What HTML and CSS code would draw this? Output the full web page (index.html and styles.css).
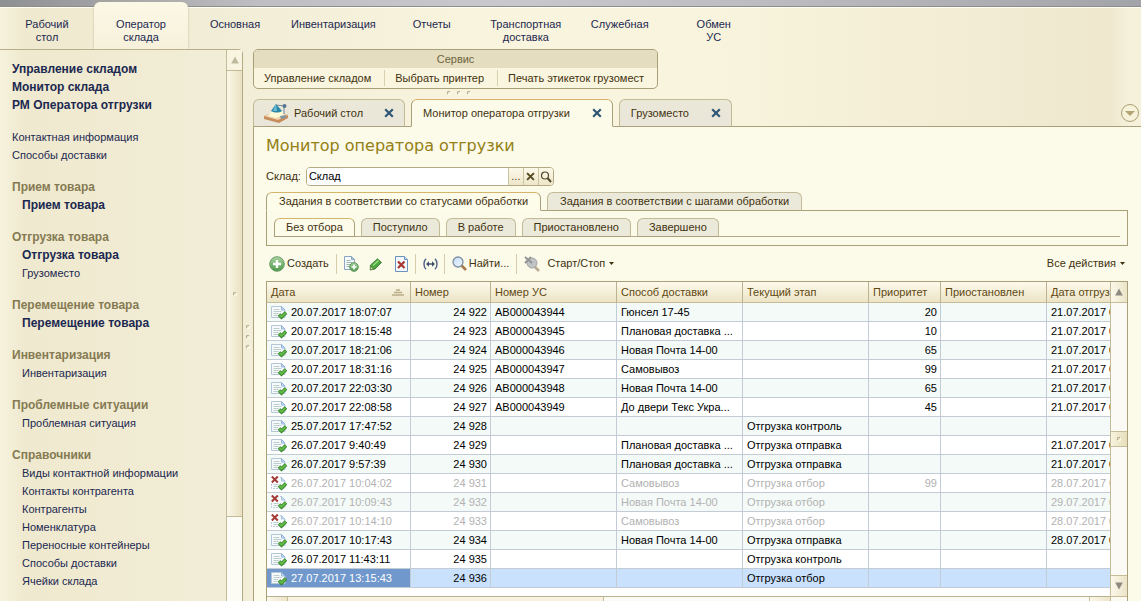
FILE: index.html
```html
<!DOCTYPE html>
<html lang="ru">
<head>
<meta charset="utf-8">
<title>Монитор оператора отгрузки</title>
<link rel="stylesheet" href="styles.css">
</head>
<body>
<svg class="defs" aria-hidden="true">
  <defs>
    <linearGradient id="gGreen" x1="0" y1="0" x2="0" y2="1"><stop offset="0" stop-color="#a9d3a0"/><stop offset="1" stop-color="#4c9a48"/></linearGradient>
    <linearGradient id="gLens" x1="0" y1="0" x2="1" y2="1"><stop offset="0" stop-color="#c3dcf2"/><stop offset="1" stop-color="#f1f8fe"/></linearGradient>
    <symbol id="doc" viewBox="0 0 16 16">
      <path d="M.5 1.500h10l3.500 3.500v7.500H.5z" fill="#f6fafd" stroke="#b3c8d4"/>
      <path d="M10.500 1.500V5H14z" fill="#cfe0f3" stroke="#90b2dc"/>
      <path d="M2.500 4.500h6M2.500 6.500h8M2.500 8.500h5M2.500 10.500h4" stroke="#bccfcb"/>
      <path d="M8 9.500l2.500 2.500 4.500-4.500" fill="none" stroke="#2f7d2a" stroke-width="3.600"/>
      <path d="M8.300 9.800l2.200 2 4.200-4" fill="none" stroke="#63bb45" stroke-width="2"/>
    </symbol>
    <symbol id="docdel" viewBox="0 0 16 16">
      <path d="M.5 8v4.500H14V5l-3.500-3.500H8" fill="#f8fbfd" stroke="#b9cad6" stroke-dasharray="2 1"/>
      <path d="M10.500 1.500V5H14z" fill="#cfe0f3" stroke="#a9c3e4"/>
      <path d="M2.500 8.500h5M2.500 10.500h4" stroke="#bccfcb"/>
      <path d="M8 9.500l2.500 2.500 4.500-4.500" fill="none" stroke="#2f7d2a" stroke-width="3.600"/>
      <path d="M8.300 9.800l2.200 2 4.200-4" fill="none" stroke="#63bb45" stroke-width="2"/>
      <path d="M.8.500l6 6M6.800.500l-6 6" stroke="#a33a36" stroke-width="2"/>
    </symbol>
    <symbol id="cross" viewBox="0 0 10 10"><path d="M1.200 1.200l7.600 7.600M8.800 1.200L1.200 8.800" stroke="currentColor" stroke-width="2.200"/></symbol>
    <symbol id="down" viewBox="0 0 5 3"><path d="M0 0h5L2.500 3z" fill="currentColor"/></symbol>
    <symbol id="up" viewBox="0 0 8 8"><path d="M4 .5L7.800 7.500H.2z" fill="currentColor"/></symbol>
  </defs>
</svg>

<div class="strip"></div>
<nav class="sections">
  <a href="#">Рабочий<br>стол</a>
  <a href="#" class="current">Оператор<br>склада</a>
  <a href="#">Основная</a>
  <a href="#">Инвентаризация</a>
  <a href="#">Отчеты</a>
  <a href="#">Транспортная<br>доставка</a>
  <a href="#">Служебная</a>
  <a href="#">Обмен<br>УС</a>
</nav>

<div class="work">
  <aside class="side">
    <nav class="menu">
      <div class="group top">
        <a href="#" class="strong">Управление складом</a>
        <a href="#" class="strong">Монитор склада</a>
        <a href="#" class="strong">РМ Оператора отгрузки</a>
      </div>
      <div class="group top">
        <a href="#">Контактная информация</a>
        <a href="#">Способы доставки</a>
      </div>
      <div class="group">
        <h2>Прием товара</h2>
        <a href="#" class="strong">Прием товара</a>
      </div>
      <div class="group">
        <h2>Отгрузка товара</h2>
        <a href="#" class="strong">Отгрузка товара</a>
        <a href="#">Грузоместо</a>
      </div>
      <div class="group">
        <h2>Перемещение товара</h2>
        <a href="#" class="strong">Перемещение товара</a>
      </div>
      <div class="group">
        <h2>Инвентаризация</h2>
        <a href="#">Инвентаризация</a>
      </div>
      <div class="group">
        <h2>Проблемные ситуации</h2>
        <a href="#">Проблемная ситуация</a>
      </div>
      <div class="group">
        <h2>Справочники</h2>
        <a href="#">Виды контактной информации</a>
        <a href="#">Контакты контрагента</a>
        <a href="#">Контрагенты</a>
        <a href="#">Номенклатура</a>
        <a href="#">Переносные контейнеры</a>
        <a href="#">Способы доставки</a>
        <a href="#">Ячейки склада</a>
      </div>
    </nav>
    <div class="side-scroll">
      <span class="arrow"><svg width="8" height="8"><use href="#up"/></svg></span>
      <span class="thumb"><i class="dot"></i></span>
    </div>
  </aside>
  <div class="splitter"><i class="dot"></i><i class="dot"></i><i class="dot"></i></div>

  <main class="main">
    <section class="service">
      <h2>Сервис</h2>
      <div class="commands">
        <button type="button">Управление складом</button>
        <button type="button">Выбрать принтер</button>
        <button type="button">Печать этикеток грузомест</button>
      </div>
    </section>
    <div class="grip"><i class="dot"></i><i class="dot"></i><i class="dot"></i></div>

    <div class="windows">
      <div class="tab desk">
        <svg class="lamp" width="25" height="22" viewBox="0 0 25 22">
          <path d="M0 14l13-5 11 4v3l-9 5L0 17z" fill="#c58d5c"/>
          <path d="M0 14l13-5 11 4-10 5z" fill="#f0d3ae"/>
          <path d="M8 9h10l2 4-8 3-8-2z" fill="#fffbd4"/>
          <path d="M12 2l6 7c-3 2-7 2-11 0z" fill="#2d87a8"/>
          <path d="M12 2l1 7H9z" fill="#68bdd2"/>
          <path d="M12 3l8 1v8" fill="none" stroke="#738ba0"/>
          <circle cx="20.500" cy="4" r="2" fill="#557692"/>
          <path d="M16 14l6-1v2l-5 2z" fill="#7c97ac"/>
        </svg>
        <span>Рабочий стол</span>
        <button type="button" class="close" aria-label="Закрыть"><svg width="10" height="10"><use href="#cross"/></svg></button>
      </div>
      <div class="tab current">
        <span>Монитор оператора отгрузки</span>
        <button type="button" class="close" aria-label="Закрыть"><svg width="10" height="10"><use href="#cross"/></svg></button>
      </div>
      <div class="tab">
        <span>Грузоместо</span>
        <button type="button" class="close" aria-label="Закрыть"><svg width="10" height="10"><use href="#cross"/></svg></button>
      </div>
      <button type="button" class="round" aria-label="Список окон"><svg width="10" height="5" viewBox="0 0 10 5"><path d="M0 0h10L5 5z" fill="#b3a573"/></svg></button>
    </div>

    <div class="panel">
      <h1>Монитор оператора отгрузки</h1>
      <div class="field">
        <label for="store">Склад:</label>
        <div class="combo">
          <input id="store" type="text" value="Склад">
          <button type="button">...</button>
          <button type="button" aria-label="Очистить"><svg width="9" height="9" viewBox="0 0 10 10"><use href="#cross"/></svg></button>
          <button type="button" aria-label="Открыть"><svg width="12" height="12" viewBox="0 0 12 12"><circle cx="5" cy="4.500" r="3.500" fill="none" stroke="#55492a" stroke-width="1.200"/><path d="M7.500 7l3.500 4" stroke="#55492a" stroke-width="2"/></svg></button>
        </div>
      </div>

      <div class="pages">
        <button type="button" class="current">Задания в соответствии со статусами обработки</button>
        <button type="button">Задания в соответствии с шагами обработки</button>
      </div>
      <div class="page-box">
        <div class="filters">
          <button type="button" class="current">Без отбора</button>
          <button type="button">Поступило</button>
          <button type="button">В работе</button>
          <button type="button">Приостановлено</button>
          <button type="button">Завершено</button>
        </div>
      </div>

      <div class="toolbar">
        <button type="button"><svg width="16" height="16" viewBox="0 0 16 16"><circle cx="8" cy="8" r="7.300" fill="url(#gGreen)" stroke="#6d9c6a"/><path d="M8 4v8M4 8h8" stroke="#fff" stroke-width="2.400"/></svg>Создать</button>
        <i class="sep"></i>
        <button type="button" class="icon" aria-label="Скопировать"><svg width="16" height="16" viewBox="0 0 16 16"><path d="M1.500.5h7l3 3v10h-10z" fill="#f5fafe" stroke="#8aa6c4"/><path d="M8.500.5v3h3z" fill="#b9d2ec" stroke="#8aa6c4"/><path d="M3.500 4.500h4M3.500 6.500h6M3.500 8.500h5M3.500 10.500h4" stroke="#9fb7a8"/><circle cx="11" cy="11" r="4.300" fill="url(#gGreen)" stroke="#5f955e"/><path d="M11 8.500v5M8.500 11h5" stroke="#fff" stroke-width="1.600"/></svg></button>
        <button type="button" class="icon" aria-label="Изменить"><svg width="14" height="14" viewBox="0 0 14 14"><path d="M1.500 8L8.500 1.800l4 3.700L6 12l-4.800 1z" fill="#4da63e" stroke="#2c7430" stroke-width=".8"/><path d="M4 8.500L9.500 3.500" stroke="#9ddc80" stroke-width="1.500"/><path d="M1.700 9.500l2.600 2.500-3 .8z" fill="#f0ddac" stroke="#52733a" stroke-width=".6"/></svg></button>
        <button type="button" class="icon" aria-label="Пометить на удаление"><svg width="13" height="16" viewBox="0 0 13 16"><path d="M.5.5h9l3 3v12H.5z" fill="#f3f8fd" stroke="#6c93bd"/><path d="M9.500.5v3h3" fill="#bcd4ec" stroke="#6c93bd"/><path d="M3 5.500l6.500 6.500M9.500 5.500L3 12" stroke="#a8352e" stroke-width="2.200"/></svg></button>
        <i class="sep"></i>
        <button type="button" class="icon" aria-label="Интервал"><svg width="15" height="12" viewBox="0 0 15 12"><path d="M3 .8C.3 3.500.3 8.500 3 11.200M12 .8c2.700 2.700 2.700 7.700 0 10.400" fill="none" stroke="#4c6383" stroke-width="1.400"/><path d="M4 6h7" stroke="#3c4f6b" stroke-width="1.400"/><path d="M3 6l3-2.800v5.600zM12 6L9 3.200v5.600z" fill="#3c4f6b"/></svg></button>
        <i class="sep"></i>
        <button type="button"><svg width="15" height="15" viewBox="0 0 15 15"><path d="M9 9l5 5" stroke="#a9794f" stroke-width="2.600"/><circle cx="6" cy="6" r="5" fill="url(#gLens)" stroke="#8090a4" stroke-width="1.300"/></svg>Найти...</button>
        <i class="sep"></i>
        <button type="button" class="icon" aria-label="Отменить поиск"><svg width="16" height="16" viewBox="0 0 16 16"><path d="M10 10l5 5" stroke="#b9aa90" stroke-width="2.600"/><circle cx="8" cy="7" r="5" fill="#bfc3c4" stroke="#a2a6a8"/><path d="M1 1l7 6M7 1L1 7" stroke="#949494" stroke-width="2"/></svg></button>
        <button type="button" class="drop">Старт/Стоп<svg width="5" height="3"><use href="#down"/></svg></button>
        <button type="button" class="drop all">Все действия<svg width="5" height="3"><use href="#down"/></svg></button>
      </div>

      <div class="grid">
        <div class="view">
          <table>
            <colgroup><col class="c-date"><col class="c-num"><col class="c-wide"><col class="c-wide"><col class="c-wide"><col class="c-pri"><col class="c-stop"><col></colgroup>
            <thead>
              <tr><th><span class="sorted">Дата<svg width="12" height="7" viewBox="0 0 12 7"><path d="M4 1h4M2 3.500h8M0 6h12" stroke="#b9ad86" stroke-width="1.700"/></svg></span></th><th>Номер</th><th>Номер УС</th><th>Способ доставки</th><th>Текущий этап</th><th>Приоритет</th><th>Приостановлен</th><th>Дата отгруз</th></tr>
            </thead>
            <tbody>
              <tr><td><svg><use href="#doc"/></svg>20.07.2017 18:07:07</td><td class="n">24 922</td><td>AB000043944</td><td>Гюнсел 17-45</td><td></td><td class="n">20</td><td></td><td>21.07.2017 0</td></tr>
              <tr><td><svg><use href="#doc"/></svg>20.07.2017 18:15:48</td><td class="n">24 923</td><td>AB000043945</td><td>Плановая доставка ...</td><td></td><td class="n">10</td><td></td><td>21.07.2017 0</td></tr>
              <tr><td><svg><use href="#doc"/></svg>20.07.2017 18:21:06</td><td class="n">24 924</td><td>AB000043946</td><td>Новая Почта 14-00</td><td></td><td class="n">65</td><td></td><td>21.07.2017 0</td></tr>
              <tr><td><svg><use href="#doc"/></svg>20.07.2017 18:31:16</td><td class="n">24 925</td><td>AB000043947</td><td>Самовывоз</td><td></td><td class="n">99</td><td></td><td>21.07.2017 0</td></tr>
              <tr><td><svg><use href="#doc"/></svg>20.07.2017 22:03:30</td><td class="n">24 926</td><td>AB000043948</td><td>Новая Почта 14-00</td><td></td><td class="n">65</td><td></td><td>21.07.2017 0</td></tr>
              <tr><td><svg><use href="#doc"/></svg>20.07.2017 22:08:58</td><td class="n">24 927</td><td>AB000043949</td><td>До двери Текс Укра...</td><td></td><td class="n">45</td><td></td><td>21.07.2017 0</td></tr>
              <tr><td><svg><use href="#doc"/></svg>25.07.2017 17:47:52</td><td class="n">24 928</td><td></td><td></td><td>Отгрузка контроль</td><td></td><td></td><td></td></tr>
              <tr><td><svg><use href="#doc"/></svg>26.07.2017 9:40:49</td><td class="n">24 929</td><td></td><td>Плановая доставка ...</td><td>Отгрузка отправка</td><td></td><td></td><td>21.07.2017 0</td></tr>
              <tr><td><svg><use href="#doc"/></svg>26.07.2017 9:57:39</td><td class="n">24 930</td><td></td><td>Плановая доставка ...</td><td>Отгрузка отправка</td><td></td><td></td><td>21.07.2017 0</td></tr>
              <tr class="deleted"><td><svg><use href="#docdel"/></svg>26.07.2017 10:04:02</td><td class="n">24 931</td><td></td><td>Самовывоз</td><td>Отгрузка отбор</td><td class="n">99</td><td></td><td>28.07.2017 0</td></tr>
              <tr class="deleted"><td><svg><use href="#docdel"/></svg>26.07.2017 10:09:43</td><td class="n">24 932</td><td></td><td>Новая Почта 14-00</td><td>Отгрузка отбор</td><td></td><td></td><td>29.07.2017 0</td></tr>
              <tr class="deleted"><td><svg><use href="#docdel"/></svg>26.07.2017 10:14:10</td><td class="n">24 933</td><td></td><td>Самовывоз</td><td>Отгрузка отбор</td><td></td><td></td><td>28.07.2017 0</td></tr>
              <tr><td><svg><use href="#doc"/></svg>26.07.2017 10:17:43</td><td class="n">24 934</td><td></td><td>Новая Почта 14-00</td><td>Отгрузка отправка</td><td></td><td></td><td>28.07.2017 0</td></tr>
              <tr><td><svg><use href="#doc"/></svg>26.07.2017 11:43:11</td><td class="n">24 935</td><td></td><td></td><td>Отгрузка контроль</td><td></td><td></td><td></td></tr>
              <tr class="selected"><td><svg><use href="#doc"/></svg>27.07.2017 13:15:43</td><td class="n">24 936</td><td></td><td></td><td>Отгрузка отбор</td><td></td><td></td><td></td></tr>
            </tbody>
          </table>
        </div>
        <div class="vscroll">
          <span class="btn head"><svg width="8" height="8"><use href="#up"/></svg></span>
          <span class="before"></span>
          <span class="thumb"><i class="dot"></i></span>
          <span class="after"></span>
          <span class="btn foot"><svg width="8" height="8"><use href="#up"/></svg></span>
        </div>
        <div class="hscroll"><span class="btn left"><svg width="8" height="8"><use href="#up"/></svg></span><span class="bar"></span><span class="rest"></span><span class="btn right"><svg width="8" height="8"><use href="#up"/></svg></span></div>
        <div class="corner"></div>
      </div>
    </div>
  </main>
</div>
</body>
</html>
```
FILE: styles.css
```css
* { box-sizing: border-box; }

body {
  margin: 0;
  height: 100vh;
  display: flex;
  flex-direction: column;
  overflow: hidden;
  font: 11px/13px "Liberation Sans", Arial, sans-serif;
  color: #3f3210;
  background: linear-gradient(90deg, #f6f3dd 0, #efe9cf 24px, #f2edd6 220px, #f9f4de 480px, #f9f4dd 700px, #efe8cf 1110px, #f5f1db 1130px);
}

h1, h2 { margin: 0; font-weight: normal; font-size: 11px; }
a { color: #1b2850; text-decoration: none; }
button {
  margin: 0;
  padding: 0;
  border: 0;
  background: none;
  font: inherit;
  color: inherit;
  white-space: nowrap;
}
svg { display: block; flex: none; }
.defs { position: absolute; width: 0; height: 0; }

.dot {
  width: 4px;
  height: 4px;
  border: 1px solid #b0a684;
  border-right-color: #fffdf0;
  border-bottom-color: #fffdf0;
  border-radius: 2px;
}

/* Section bar */
.strip {
  flex: none;
  height: 7px;
  background: linear-gradient(90deg, #8f9092, #bfbfc3 260px, #c9c8cd 500px, #bcbcc1 760px, #a3a4a9);
  border-bottom: 1px solid #8d8e8c;
}
.sections {
  flex: none;
  display: flex;
  height: 42px;
  border-top: 1px solid #fffef0;
}
.sections a {
  min-width: 94px;
  padding: 10px 9px 0;
  text-align: center;
}
.sections .current {
  margin-top: -6px;
  padding-top: 16px;
  border-radius: 6px 6px 0 0;
  background: linear-gradient(#fcf8e6, #f7f1db);
  box-shadow: 0 0 2px #b9ae8c;
  clip-path: inset(-3px -2px 0 -2px);
}

/* Side menu */
.work { flex: 1; min-height: 0; display: flex; }
.side {
  flex: none;
  width: 243px;
  display: flex;
  border-top: 1px solid #b8ae8a;
  border-right: 1px solid #b3a985;
  border-top-right-radius: 5px;
}
.menu {
  flex: 1;
  display: flex;
  flex-direction: column;
  gap: 14px;
  padding: 10px 0 0 12px;
  line-height: 18px;
  overflow: hidden;
}
.group { display: flex; flex-direction: column; flex: none; }
.group a { padding-left: 10px; }
.group.top a { padding-left: 0; }
.group h2 { font-weight: bold; font-size: 12px; color: #857a52; }
.strong { font-weight: bold; font-size: 12px; }
.side-scroll {
  width: 16px;
  display: flex;
  flex-direction: column;
  border-left: 1px solid #c3ba9a;
  background: #fcfbf4;
}
.side-scroll .arrow {
  height: 21px;
  display: grid;
  place-items: center;
  color: #c0b99d;
  border-bottom: 1px solid #c3ba9a;
  background: #f8f4e0;
}
.side-scroll .thumb {
  flex: 0 1 81%;
  display: grid;
  place-items: center;
  border-bottom: 1px solid #c3ba9a;
  background: linear-gradient(90deg, #faf7e6, #e9e1c2);
}
.splitter {
  flex: none;
  width: 10px;
  display: flex;
  flex-direction: column;
  align-items: center;
  justify-content: center;
  gap: 6px;
  padding-top: 24px;
}

/* Main area */
.main { flex: 1; min-width: 0; display: flex; flex-direction: column; }
.service {
  align-self: flex-start;
  border: 1px solid #a99f78;
  border-radius: 5px;
  overflow: hidden;
  background: #faf5de;
}
.service h2 {
  line-height: 18px;
  text-align: center;
  color: #6d6440;
  background: #e5ddbf;
}
.commands { display: flex; padding: 2px 0; }
.commands button { padding: 0 13px 0 10px; line-height: 16px; }
.commands button + button { border-left: 1px solid #d8d0ae; }
.grip {
  display: flex;
  justify-content: center;
  gap: 6px;
  width: 412px;
  height: 10px;
  padding-top: 2px;
}
.windows {
  flex: none;
  display: flex;
  gap: 6px;
  height: 28px;
  box-shadow: inset 0 -1px #a99f78;
}
.tab {
  display: flex;
  align-items: center;
  justify-content: space-between;
  gap: 22px;
  padding: 0 10px 0 11px;
  border: 1px solid #c2b997;
  border-bottom-color: #a99f78;
  border-radius: 6px 6px 0 0;
  background: linear-gradient(#ebe8d8, #e9e6da);
}
.tab.desk { gap: 5px; padding-left: 10px; }
.tab.desk .close { margin-left: 16px; }
.tab.current {
  border-color: #a99f78;
  border-top-color: #d5b56c;
  border-bottom-color: #fcfae9;
  background: #fcfae9;
}
.close { color: #2e5675; }
.round {
  width: 18px;
  height: 18px;
  margin: 5px 2px 0 auto;
  display: grid;
  place-items: center;
  border: 1px solid #ab9f73;
  border-radius: 50%;
  background: #f7f2da;
}
.panel {
  flex: 1;
  min-height: 0;
  display: flex;
  flex-direction: column;
  padding: 8px 13px 0 12px;
  border-left: 1px solid #a99f78;
  background: #fcfae9;
}
h1 { font: 16px/22px "DejaVu Sans", Verdana, sans-serif; color: #948014; }
.field {
  display: flex;
  align-items: center;
  gap: 5px;
  margin-top: 10px;
}
.combo {
  display: flex;
  height: 19px;
  border: 1px solid #b3a985;
  border-radius: 4px;
  overflow: hidden;
  background: #fff;
}
.combo input {
  width: 201px;
  padding: 0 2px;
  border: 0;
  outline: 0;
  background: #fff;
  font: inherit;
  color: #000;
}
.combo button {
  width: 15px;
  display: grid;
  place-items: center;
  border-left: 1px solid #cdc4a2;
  color: #55491f;
  background: linear-gradient(#fcf9ea, #eee6c9);
}

/* The open page tab covers the edge of the box below. */
.pages { position: relative; z-index: 1; display: flex; gap: 6px; margin-top: 6px; }
.pages button, .filters button {
  height: 19px;
  padding: 0 11px;
  border: 1px solid #c2b997;
  border-bottom-color: #a99f78;
  border-radius: 6px 6px 0 0;
  background: #ebe9d9;
}
.pages button { padding: 0 12px; }
.pages .current, .filters .current {
  border-color: #a99f78;
  border-top-color: #d5b56c;
  background: #fdfbea;
}
.pages .current { border-bottom-color: #fcfae9; }
.page-box {
  flex: none;
  margin-top: -1px;
  padding: 7px 7px 8px;
  border: 1px solid #a99f78;
}
.filters { display: flex; gap: 6px; box-shadow: inset 0 -1px #b3a985; }

.toolbar {
  flex: none;
  display: flex;
  align-items: center;
  height: 35px;
  padding-left: 3px;
}
.toolbar button { display: flex; align-items: center; gap: 2px; }
.toolbar .icon { width: 25px; justify-content: center; }
.toolbar .drop { gap: 4px; padding: 0 3px; }
.toolbar .all { margin-left: auto; }
.sep { width: 1px; height: 20px; margin: 0 7px; background: #d4cba9; }
.sep + .icon { margin-left: -5px; }
.icon + .sep { margin-left: 1px; }

/* Task list */
.grid {
  flex: 1;
  min-height: 0;
  display: grid;
  grid-template: 314px 16px / minmax(0, 1fr) 17px;
  border: 1px solid #a99f78;
  border-bottom: 0;
  background: #fff;
}
.view { overflow: hidden; }
table { width: 100%; table-layout: fixed; border-collapse: separate; border-spacing: 0; color: #000; }
.c-date { width: 144px; }
.c-num { width: 80px; }
.c-wide { width: 126px; }
.c-pri { width: 72px; }
.c-stop { width: 106px; }
th {
  height: 21px;
  padding: 0 4px;
  font-weight: normal;
  text-align: left;
  white-space: nowrap;
  overflow: hidden;
  color: #5e4812;
  border-right: 1px solid #bdb38f;
  border-bottom: 1px solid #c6bc98;
  background: linear-gradient(#fdfaec, #ece4c6);
}
td {
  height: 19px;
  padding: 0 4px;
  white-space: nowrap;
  overflow: hidden;
  border-right: 1px solid #c3ccd4;
  border-bottom: 1px solid #c3ccd4;
}
th:last-child, td:last-child { padding-right: 0; border-right: 0; }
td svg { float: left; width: 16px; height: 16px; margin: -1px 4px -2px 0; }
tbody tr:nth-child(odd) { background: #f3faf7; }
td.n { text-align: right; padding-right: 3px; }
.sorted { display: flex; align-items: center; justify-content: space-between; padding-right: 2px; }
.deleted { color: #b2b2b2; }
tbody tr.selected { background: #c9e1fc; }
.selected td:first-child { color: #fff; background: #7098cc; }

.vscroll { display: flex; flex-direction: column; border-left: 1px solid #c3ba9a; background: #fcfaf5; }
.btn { display: grid; place-items: center; flex: none; color: #8c8a80; background: linear-gradient(90deg, #fbf8ea, #ece4c8); }
.head { height: 21px; border-bottom: 1px solid #c6bc98; }
.foot { height: 21px; border-top: 1px solid #c6bc98; }
.foot svg { transform: rotate(180deg); }
.before { flex: 127; }
.after { flex: 128; }
.vscroll .thumb {
  flex: none;
  height: 16px;
  display: grid;
  place-items: center;
  border: 1px solid #c6bc98;
  border-width: 1px 0;
  background: linear-gradient(90deg, #f7f3dd, #e6deba);
}
.hscroll { display: flex; border-top: 1px solid #b9b08d; background: #fcfaf5; }
.left, .right { width: 21px; color: #c3bda6; }
.left { border-right: 1px solid #c6bc98; }
.right { border-left: 1px solid #c6bc98; }
.left svg { transform: rotate(-90deg); }
.right svg { transform: rotate(90deg); }
.bar { flex: 315; border-right: 1px solid #c6bc98; background: linear-gradient(#faf5e4, #eee6ca); }
.rest { flex: 486; }
.corner { border-top: 1px solid #c6bc98; border-left: 1px solid #c6bc98; background: #fcfaf0; }
```
